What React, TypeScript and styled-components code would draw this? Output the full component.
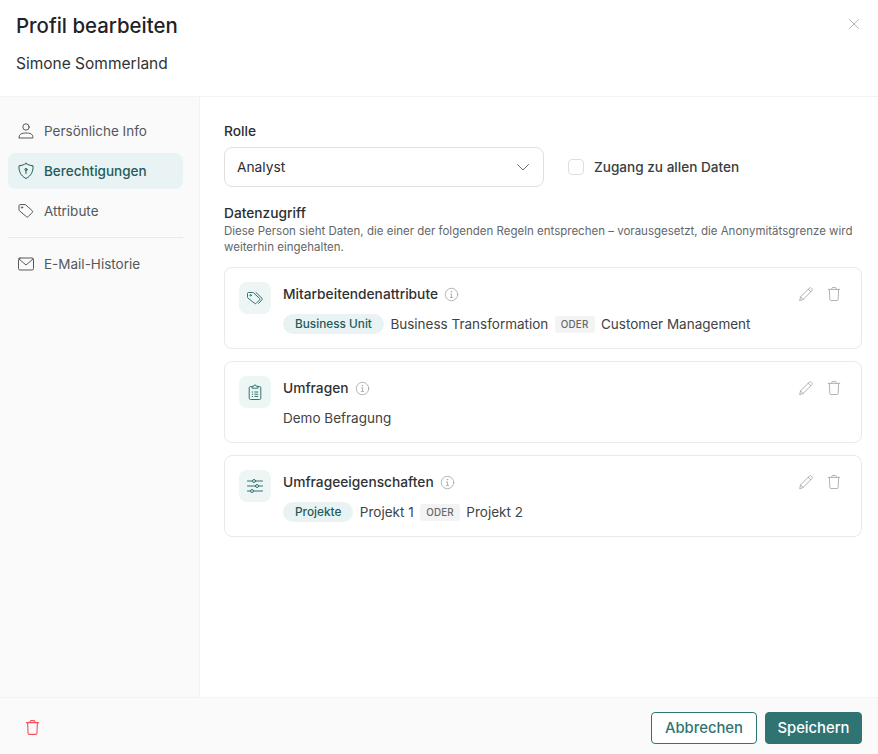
import { ReactNode } from "react";
import styled, { createGlobalStyle } from "styled-components";

const GlobalStyle = createGlobalStyle`
    html, body {
        margin: 0;
        padding: 0;
        background: #fff;
    }
    body {
        font-family: Inter, "Liberation Sans", sans-serif;
        color: #222;
    }
    * {
        box-sizing: border-box;
    }
`;

const Dialog = styled.div`
    width: 878px;
    height: 754px;
    display: flex;
    flex-direction: column;
    background: #fff;
`;

const Header = styled.header`
    height: 97px;
    flex: none;
    padding: 13px 16px 0;
    border-bottom: 1px solid #f2f3f3;
    display: flex;
    justify-content: space-between;
    align-items: flex-start;
`;

const Title = styled.h1`
    margin: 0;
    font-size: 20.4px;
    line-height: 26px;
    font-weight: 500;
    color: #1f2226;
`;

const Subtitle = styled.div`
    margin-top: 13px;
    font-size: 15.5px;
    line-height: 24px;
    color: #303336;
`;

const CloseButton = styled.div`
    margin: 3px 0 0 0;
    width: 16px;
    height: 16px;
    color: #a8abad;
`;

const Body = styled.div`
    flex: 1;
    display: flex;
    min-height: 0;
`;

const Sidebar = styled.nav`
    width: 200px;
    flex: none;
    padding: 16px 16px 0 8px;
    background: #fafafa;
    border-right: 1px solid #f2f3f3;
    display: flex;
    flex-direction: column;
    gap: 4px;
`;

const NavItem = styled.div<{ $active?: boolean }>`
    height: 36px;
    padding: 0 0 0 9px;
    display: flex;
    align-items: center;
    gap: 9px;
    border-radius: 8px;
    font-size: 13.5px;
    font-weight: ${(props) => (props.$active ? 500 : 400)};
    background: ${(props) => (props.$active ? "#e9f3f3" : "transparent")};
    color: ${(props) => (props.$active ? "#1f5c5a" : "#55585b")};
`;

const NavDivider = styled.div`
    height: 1px;
    background: #e8e9e9;
    margin: 4px 0;
`;

const Main = styled.main`
    flex: 1;
    padding: 24px 16px 0 24px;
`;

const Label = styled.div`
    font-size: 13.75px;
    line-height: 20px;
    font-weight: 500;
    color: #2b2e31;
`;

const RoleRow = styled.div`
    display: flex;
    align-items: center;
    gap: 24px;
    margin-top: 6px;
`;

const Select = styled.div`
    width: 320px;
    height: 40px;
    padding: 0 13px 0 12px;
    display: flex;
    align-items: center;
    justify-content: space-between;
    border: 1px solid #dfe1e1;
    border-radius: 8px;
    font-size: 13.75px;
    color: #2b2e31;
`;

const CheckRow = styled.div`
    display: flex;
    align-items: center;
    gap: 10px;
    font-size: 13.6px;
    font-weight: 500;
    color: #3a3d40;
`;

const CheckBox = styled.div`
    width: 16px;
    height: 16px;
    border: 1px solid #dcdedf;
    border-radius: 4px;
`;

const AccessSection = styled.section`
    margin-top: 16px;
`;

const Hint = styled.p`
    margin: 0;
    font-size: 11.5px;
    line-height: 16px;
    color: #63676a;
`;

const RuleList = styled.div`
    margin-top: 12px;
    display: flex;
    flex-direction: column;
    gap: 12px;
`;

const RuleCard = styled.div`
    height: 82px;
    padding: 14px 14px 0 14px;
    border: 1px solid #e8e9e9;
    border-radius: 8px;
    display: flex;
    gap: 12px;
`;

const RuleIcon = styled.div`
    width: 32px;
    height: 32px;
    flex: none;
    border-radius: 8px;
    background: #edf5f5;
    color: #2f7472;
    display: flex;
    align-items: center;
    justify-content: center;
`;

const RuleContent = styled.div`
    flex: 1;
    min-width: 0;
`;

const RuleTitleRow = styled.div`
    height: 24px;
    display: flex;
    align-items: center;
    gap: 6px;
    font-size: 13.75px;
    font-weight: 500;
    color: #2f3235;
`;

const InfoIcon = styled.span`
    display: flex;
    color: #a4a7a9;
`;

const RuleValues = styled.div`
    margin-top: 8px;
    height: 20px;
    display: flex;
    align-items: center;
    gap: 6.5px;
    font-size: 13.5px;
    color: #404346;
`;

const Pill = styled.span`
    height: 20px;
    padding: 0 12px;
    display: flex;
    align-items: center;
    border-radius: 10px;
    background: #e9f3f3;
    color: #1f5c5a;
    font-size: 11.8px;
    font-weight: 500;
`;

const OrBadge = styled.span`
    height: 17px;
    padding: 0 6px;
    display: flex;
    align-items: center;
    border-radius: 3px;
    background: #f3f3f3;
    color: #66696c;
    font-size: 9.8px;
    font-weight: 500;
    letter-spacing: 0.2px;
`;

const RuleActions = styled.div`
    display: flex;
    gap: 12px;
    margin: 4px 5px 0 0;
    color: #a6a8aa;
`;

const Footer = styled.footer`
    height: 57px;
    flex: none;
    padding: 3px 16px 0 24px;
    display: flex;
    align-items: center;
    justify-content: space-between;
    background: #fafafa;
    border-top: 1px solid #f2f3f3;
`;

const DangerIcon = styled.div`
    display: flex;
    color: #f4555d;
`;

const FooterButtons = styled.div`
    display: flex;
    gap: 8px;
`;

const Button = styled.div<{ $primary?: boolean }>`
    height: 32px;
    padding: 0 ${(props) => (props.$primary ? "11.5px" : "13px")};
    display: flex;
    align-items: center;
    border-radius: 4px;
    border: 1px solid #2f7472;
    font-size: 14.8px;
    font-weight: 500;
    background: ${(props) => (props.$primary ? "#2f7472" : "#fff")};
    color: ${(props) => (props.$primary ? "#fff" : "#2f7472")};
`;

function Icon({ size = 18, sw = 1, children }: { size?: number; sw?: number; children: ReactNode }) {
    return (
        <svg width={size} height={size} viewBox="0 0 18 18" fill="none" stroke="currentColor" strokeWidth={sw} strokeLinecap="round" strokeLinejoin="round">
            {children}
        </svg>
    );
}

const UserIcon = () => (
    <Icon>
        <circle cx="9" cy="5" r="3.2" />
        <path d="M2.2 14.6c0-2.4 2.6-3.6 6.800-3.600s6.800 1.200 6.800 3.600v1.400H2.200z" />
    </Icon>
);

const ShieldIcon = () => (
    <Icon>
        <path d="M9 1.500c2 1.300 4.200 2 7 2.300.3 5.600-1.700 10-7 12.700C3.700 13.800 1.700 9.400 2 3.800c2.800-.3 5-1 7-2.300z" />
        <circle cx="9" cy="7.500" r="1.100" />
        <path d="M9 8.600v2.900" />
    </Icon>
);

const TagIcon = () => (
    <Icon>
        <path d="M2 3.600c0-.6.400-1 1-1h5c.3 0 .6.100.8.300l6.600 6c.4.400.4 1 0 1.400l-4.400 4.500c-.4.400-1 .4-1.400 0L2.300 8.700c-.2-.2-.3-.5-.3-.8z" />
        <circle cx="5" cy="5.500" r=".7" />
    </Icon>
);

const MailIcon = () => (
    <Icon>
        <rect x="1.500" y="3" width="15" height="12" rx="1.500" />
        <path d="M2 4l7 6 7-6" />
    </Icon>
);

const TagsIcon = () => (
    <Icon>
        <path d="M1.500 4.500c0-.6.400-1 1-1h4.300c.3 0 .6.100.8.300l6 5.700c.4.400.4 1 0 1.400l-3.500 3.500c-.4.400-1 .4-1.400 0L2 9.100c-.3-.2-.5-.5-.5-.8z" />
        <path d="M10 3.500l6 5.800c.4.400.4 1 0 1.400l-3.300 3.600" />
        <circle cx="4.600" cy="6.300" r=".7" />
    </Icon>
);

const ClipboardIcon = () => (
    <Icon>
        <path d="M6 3.500H4.500c-.8 0-1.300.5-1.300 1.300v10.400c0 .8.500 1.300 1.300 1.300h9c.8 0 1.300-.5 1.300-1.300V4.800c0-.8-.5-1.300-1.300-1.300H12" />
        <path d="M6 4.800V3.300h1.500c0-1.700 3-1.700 3 0H12v1.500z" />
        <path d="M6.200 9h.5M6.200 11.200h.5M6.200 13.400h.5M8.800 9h3M8.800 11.200h3M8.800 13.400h3" />
    </Icon>
);

const SlidersIcon = () => (
    <Icon>
        <path d="M1.500 4h5M9.500 4h7M1.500 9h8M12.500 9h4M1.500 14h3M7.500 14h9" />
        <circle cx="8" cy="4" r="1.500" />
        <circle cx="11" cy="9" r="1.500" />
        <circle cx="6" cy="14" r="1.500" />
    </Icon>
);

const Info = () => (
    <Icon size={15}>
        <circle cx="9" cy="9" r="7.500" />
        <path d="M7.800 8.200H9v4.300M7.500 12.500h3" />
        <circle cx="8.800" cy="5.500" r=".4" />
    </Icon>
);

const PencilIcon = () => (
    <Icon size={16}>
        <path d="M2 16l.9-3.800L12.800 2.300c.6-.6 1.500-.6 2.100 0l.8.8c.6.6.6 1.500 0 2.100L5.800 15.100z" />
        <path d="M11.500 3.600l2.900 2.900M2.900 12.200l2.900 2.900" />
    </Icon>
);

const TrashIcon = ({ size = 16, sw = 1 }: { size?: number; sw?: number }) => (
    <Icon size={size} sw={sw}>
        <path d="M2.500 3.800h13M6.500 3.800V2.700c0-.6.400-1 1-1h3c.6 0 1 .4 1 1v1.100" />
        <path d="M3.800 3.800l.5 11.200c0 .8.600 1.300 1.300 1.300h6.800c.7 0 1.300-.5 1.300-1.300l.5-11.200" />
    </Icon>
);

const Actions = () => (
    <RuleActions>
        <PencilIcon />
        <TrashIcon />
    </RuleActions>
);

export default function App() {
    return (
        <Dialog>
            <GlobalStyle />
            <Header>
                <div>
                    <Title>Profil bearbeiten</Title>
                    <Subtitle>Simone Sommerland</Subtitle>
                </div>
                <CloseButton>
                    <Icon size={16}>
                        <path d="M4 4l10 10M14 4L4 14" />
                    </Icon>
                </CloseButton>
            </Header>
            <Body>
                <Sidebar>
                    <NavItem>
                        <UserIcon />
                        Persönliche Info
                    </NavItem>
                    <NavItem $active>
                        <ShieldIcon />
                        Berechtigungen
                    </NavItem>
                    <NavItem>
                        <TagIcon />
                        Attribute
                    </NavItem>
                    <NavDivider />
                    <NavItem>
                        <MailIcon />
                        E-Mail-Historie
                    </NavItem>
                </Sidebar>
                <Main>
                    <Label>Rolle</Label>
                    <RoleRow>
                        <Select>
                            Analyst
                            <svg width="14" height="14" viewBox="0 0 14 14" fill="none" stroke="#6a6d70" strokeLinecap="round" strokeLinejoin="round">
                                <path d="M1.500 4.500L7 10l5.500-5.500" />
                            </svg>
                        </Select>
                        <CheckRow>
                            <CheckBox />
                            Zugang zu allen Daten
                        </CheckRow>
                    </RoleRow>
                    <AccessSection>
                        <Label>Datenzugriff</Label>
                        <Hint>Diese Person sieht Daten, die einer der folgenden Regeln entsprechen – vorausgesetzt, die Anonymitätsgrenze wird weiterhin eingehalten.</Hint>
                        <RuleList>
                            <RuleCard>
                                <RuleIcon>
                                    <TagsIcon />
                                </RuleIcon>
                                <RuleContent>
                                    <RuleTitleRow>
                                        Mitarbeitendenattribute
                                        <InfoIcon>
                                            <Info />
                                        </InfoIcon>
                                    </RuleTitleRow>
                                    <RuleValues>
                                        <Pill>Business Unit</Pill>
                                        Business Transformation
                                        <OrBadge>ODER</OrBadge>
                                        Customer Management
                                    </RuleValues>
                                </RuleContent>
                                <Actions />
                            </RuleCard>
                            <RuleCard>
                                <RuleIcon>
                                    <ClipboardIcon />
                                </RuleIcon>
                                <RuleContent>
                                    <RuleTitleRow>
                                        Umfragen
                                        <InfoIcon>
                                            <Info />
                                        </InfoIcon>
                                    </RuleTitleRow>
                                    <RuleValues>Demo Befragung</RuleValues>
                                </RuleContent>
                                <Actions />
                            </RuleCard>
                            <RuleCard>
                                <RuleIcon>
                                    <SlidersIcon />
                                </RuleIcon>
                                <RuleContent>
                                    <RuleTitleRow>
                                        Umfrageeigenschaften
                                        <InfoIcon>
                                            <Info />
                                        </InfoIcon>
                                    </RuleTitleRow>
                                    <RuleValues>
                                        <Pill>Projekte</Pill>
                                        Projekt 1
                                        <OrBadge>ODER</OrBadge>
                                        Projekt 2
                                    </RuleValues>
                                </RuleContent>
                                <Actions />
                            </RuleCard>
                        </RuleList>
                    </AccessSection>
                </Main>
            </Body>
            <Footer>
                <DangerIcon>
                    <TrashIcon size={17} sw={1.2} />
                </DangerIcon>
                <FooterButtons>
                    <Button>Abbrechen</Button>
                    <Button $primary>Speichern</Button>
                </FooterButtons>
            </Footer>
        </Dialog>
    );
}
